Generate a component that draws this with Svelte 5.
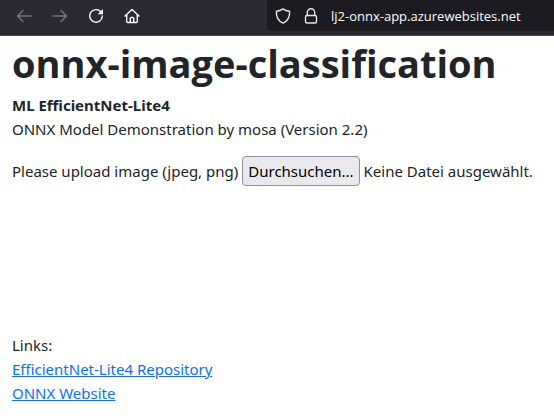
<script>
  let picker;
  let fileName = $state('Keine Datei ausgewählt.');

  function pick(event) {
    fileName = event.currentTarget.files[0]?.name ?? 'Keine Datei ausgewählt.';
  }
</script>

<div class="window">
  <header class="toolbar">
    <nav class="controls" aria-label="Browser">
      <button class="tool dim" aria-label="Back" disabled>
        <svg viewBox="0 0 16 16"><path d="M15 8H2M7 2.5 1.5 8 7 13.5" /></svg>
      </button>
      <button class="tool dim" aria-label="Forward" disabled>
        <svg viewBox="0 0 16 16"><path d="M1 8h13M9 2.5 14.5 8 9 13.5" /></svg>
      </button>
      <button class="tool" aria-label="Reload">
        <svg viewBox="0 0 16 16"><path d="M12.8 3.8A6.3 6.3 0 1 0 14.3 8" /><path class="solid" d="M15 1v5.3H9.7z" /></svg>
      </button>
      <button class="tool" aria-label="Home">
        <svg viewBox="0 0 16 16"><path d="M1 8 8 1.5 15 8M2.7 7v6.5a1 1 0 0 0 1 1h8.6a1 1 0 0 0 1-1V7M6.3 14.5v-4a1 1 0 0 1 1-1h1.4a1 1 0 0 1 1 1v4" /></svg>
      </button>
    </nav>
    <div class="address">
      <svg viewBox="0 0 16 16"><path d="M8 .9C6.200 2.300 3.900 3 1.400 3.200c-.4 5.300 1.600 9.600 6.600 11.900 5-2.300 7-6.600 6.600-11.900C12.100 3 9.800 2.300 8 .9z" /></svg>
      <svg viewBox="0 0 16 16"><path d="M4.300 7V4.400a3.700 3.700 0 0 1 7.400 0V7" /><rect x="2.500" y="7.500" width="11" height="7.500" rx="1.500" /></svg>
      <input type="text" aria-label="Address" value="lj2-onnx-app.azurewebsites.net" />
    </div>
  </header>

  <main>
    <h1>onnx-image-classification</h1>
    <p><strong>ML EfficientNet-Lite4</strong></p>
    <p>ONNX Model Demonstration by mosa (Version 2.2)</p>

    <div class="upload">
      <label for="browse">Please upload image (jpeg, png)</label>
      <button id="browse" class="browse" onclick={() => picker.click()}>Durchsuchen...</button>
      <span>{fileName}</span>
      <input bind:this={picker} type="file" accept="image/jpeg,image/png" onchange={pick} hidden />
    </div>

    <section class="preview"></section>

    <footer>
      <p>Links:</p>
      <p><a href="#repository">EfficientNet-Lite4 Repository</a></p>
      <p><a href="#onnx">ONNX Website</a></p>
    </footer>
  </main>
</div>

<style>
  :global(body) {
    margin: 0;
    background: #fff;
  }

  .window {
    font: 15px/24px 'Noto Sans', 'Open Sans', sans-serif;
    color: #212529;
  }

  .toolbar {
    display: flex;
    box-sizing: border-box;
    height: 36px;
    padding-bottom: 4px;
    background: #2b2a33;
    border-bottom: 1px solid #4a4953;
  }

  .controls {
    display: flex;
    flex: none;
    align-items: center;
    gap: 20px;
    padding-left: 16px;
  }

  .tool {
    display: flex;
    padding: 0;
    border: 0;
    background: none;
    color: #fbfbfe;
  }

  .dim {
    color: #77767e;
  }

  svg {
    flex: none;
    width: 16px;
    height: 16px;
    fill: none;
    stroke: currentColor;
    stroke-width: 1.4;
    stroke-linecap: round;
    stroke-linejoin: round;
  }

  .solid {
    fill: currentColor;
    stroke: none;
  }

  .address {
    display: flex;
    flex: 1;
    align-items: center;
    gap: 12px;
    min-width: 0;
    margin-left: 127px;
    padding-left: 8px;
    border-radius: 0 0 0 4px;
    background: #1c1b22;
    color: #e4e4e8;
  }

  .address input {
    flex: 1;
    min-width: 0;
    padding: 0;
    border: 0;
    outline: 0;
    background: none;
    color: #fbfbfe;
    font: 13px/20px 'Open Sans', 'Noto Sans', sans-serif;
  }

  main {
    padding: 3px 12px;
  }

  h1 {
    margin: 0 0 6px;
    font-family: 'Open Sans', 'Noto Sans', sans-serif;
    font-size: 38px;
    line-height: 48px;
    font-weight: 700;
  }

  p {
    margin: 0;
  }

  strong {
    font-weight: 700;
  }

  .upload {
    display: flex;
    flex-wrap: wrap;
    align-items: center;
    gap: 4px;
    margin-top: 15px;
  }

  .browse {
    height: 30px;
    padding: 0 5px;
    border: 1px solid #8f8f9d;
    border-radius: 4px;
    background: #e9e9ed;
    color: #000;
    font: inherit;
  }

  .preview {
    min-height: 147px;
  }

  a {
    color: #0d6efd;
    text-decoration: underline;
  }
</style>
